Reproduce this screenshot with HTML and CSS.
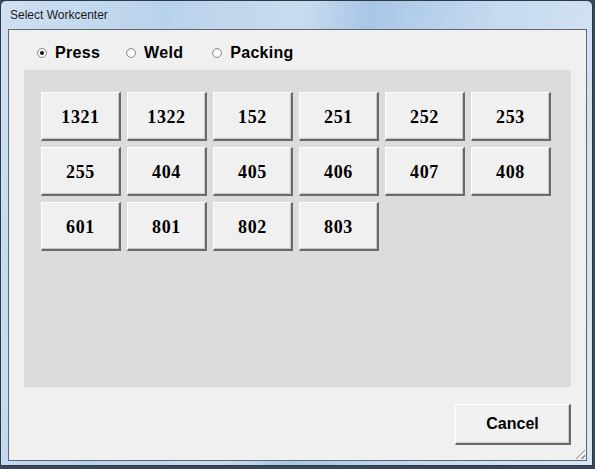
FILE: index.html
```html
<!DOCTYPE html>
<html>
<head>
<meta charset="utf-8">
<link rel="stylesheet" href="styles.css">
</head>
<body>
<div class="window">
  <div class="titlebar">Select Workcenter</div>
  <div class="client">
    <div class="radios">
      <label class="radio"><span class="dot checked"></span><span class="rlabel">Press</span></label>
      <label class="radio"><span class="dot"></span><span class="rlabel">Weld</span></label>
      <label class="radio"><span class="dot"></span><span class="rlabel">Packing</span></label>
    </div>
    <div class="panel">
      <div class="grid">
        <button class="wc">1321</button>
        <button class="wc">1322</button>
        <button class="wc">152</button>
        <button class="wc">251</button>
        <button class="wc">252</button>
        <button class="wc">253</button>
        <button class="wc">255</button>
        <button class="wc">404</button>
        <button class="wc">405</button>
        <button class="wc">406</button>
        <button class="wc">407</button>
        <button class="wc">408</button>
        <button class="wc">601</button>
        <button class="wc">801</button>
        <button class="wc">802</button>
        <button class="wc">803</button>
      </div>
    </div>
    <div class="footer">
      <button class="cancel">Cancel</button>
    </div>
    <div class="grip"></div>
  </div>
</div>
</body>
</html>
```

FILE: styles.css
```css
* { box-sizing: border-box; }
html, body { margin: 0; padding: 0; }
body {
  width: 595px;
  height: 469px;
  background: #3b4756;
  overflow: hidden;
}
.window {
  position: relative;
  width: 593px;
  height: 466px;
  border: 1px solid #2c3a4c;
  border-radius: 6px 6px 0 0;
  background: linear-gradient(100deg, #cfe0f1 0%, #b9d2ec 25%, #c9dcef 45%, #a9c6e6 55%, #c6dbf0 75%, #d8e7f5 100%);
  padding-left: 7px;
}
.titlebar {
  height: 28px;
  padding: 7px 0 0 2px;
  font-family: "Liberation Sans", Arial, sans-serif;
  font-size: 12px;
  color: #1a1a1a;
}
.client {
  position: relative;
  width: 579px;
  height: 432px;
  border: 1px solid #5e6670;
  background: #f0f0f0;
  padding: 0 14px 0 15px;
}
.radios {
  display: flex;
  align-items: center;
  height: 20px;
  margin-top: 13px;
  padding-left: 13px;
}
.radio {
  display: flex;
  align-items: center;
  font-family: "Liberation Sans", Arial, sans-serif;
  font-weight: bold;
  font-size: 16px;
  letter-spacing: 0.3px;
  color: #000;
  margin-right: 26px;
}
.radio:nth-child(2) { margin-right: 29px; }
.dot {
  width: 10px;
  height: 10px;
  border-radius: 50%;
  border: 1px solid #8f8f8f;
  background: radial-gradient(circle at 60% 60%, #ffffff 30%, #dcdcdc 100%);
  margin-right: 8px;
  position: relative;
}
.dot.checked::after {
  content: "";
  position: absolute;
  left: 2px;
  top: 2px;
  width: 4px;
  height: 4px;
  border-radius: 50%;
  background: #111;
}
.panel {
  margin-top: 7px;
  width: 547px;
  height: 317px;
  background: #dcdcdc;
  padding: 22px 0 0 17px;
}
.grid {
  display: grid;
  grid-template-columns: repeat(6, 80px);
  grid-auto-rows: 49px;
  column-gap: 6px;
  row-gap: 6px;
}
button {
  margin: 0;
  padding: 0;
  background: #f0f0f0;
  border-style: solid;
  border-width: 1px 2px 2px 1px;
  border-color: #ffffff #6a6a6a #6a6a6a #ffffff;
  box-shadow: inset -1px -1px 0 #c8c8c8;
  color: #000;
  cursor: default;
}
.wc {
  font-family: "Liberation Serif", "Times New Roman", serif;
  font-weight: bold;
  font-size: 18px;
  letter-spacing: 0.6px;
  padding-top: 2px;
}
.footer {
  display: flex;
  justify-content: flex-end;
  width: 547px;
  margin-top: 17px;
}
.cancel {
  width: 116px;
  height: 41px;
  font-family: "Liberation Sans", Arial, sans-serif;
  font-weight: bold;
  font-size: 16px;
}
.grip {
  position: absolute;
  right: 1px;
  bottom: 1px;
  width: 12px;
  height: 12px;
  background: repeating-linear-gradient(135deg, transparent 0 2px, #8a8a8a 2px 3px, transparent 3px 4px);
  clip-path: polygon(100% 0, 100% 100%, 0 100%);
}
```
